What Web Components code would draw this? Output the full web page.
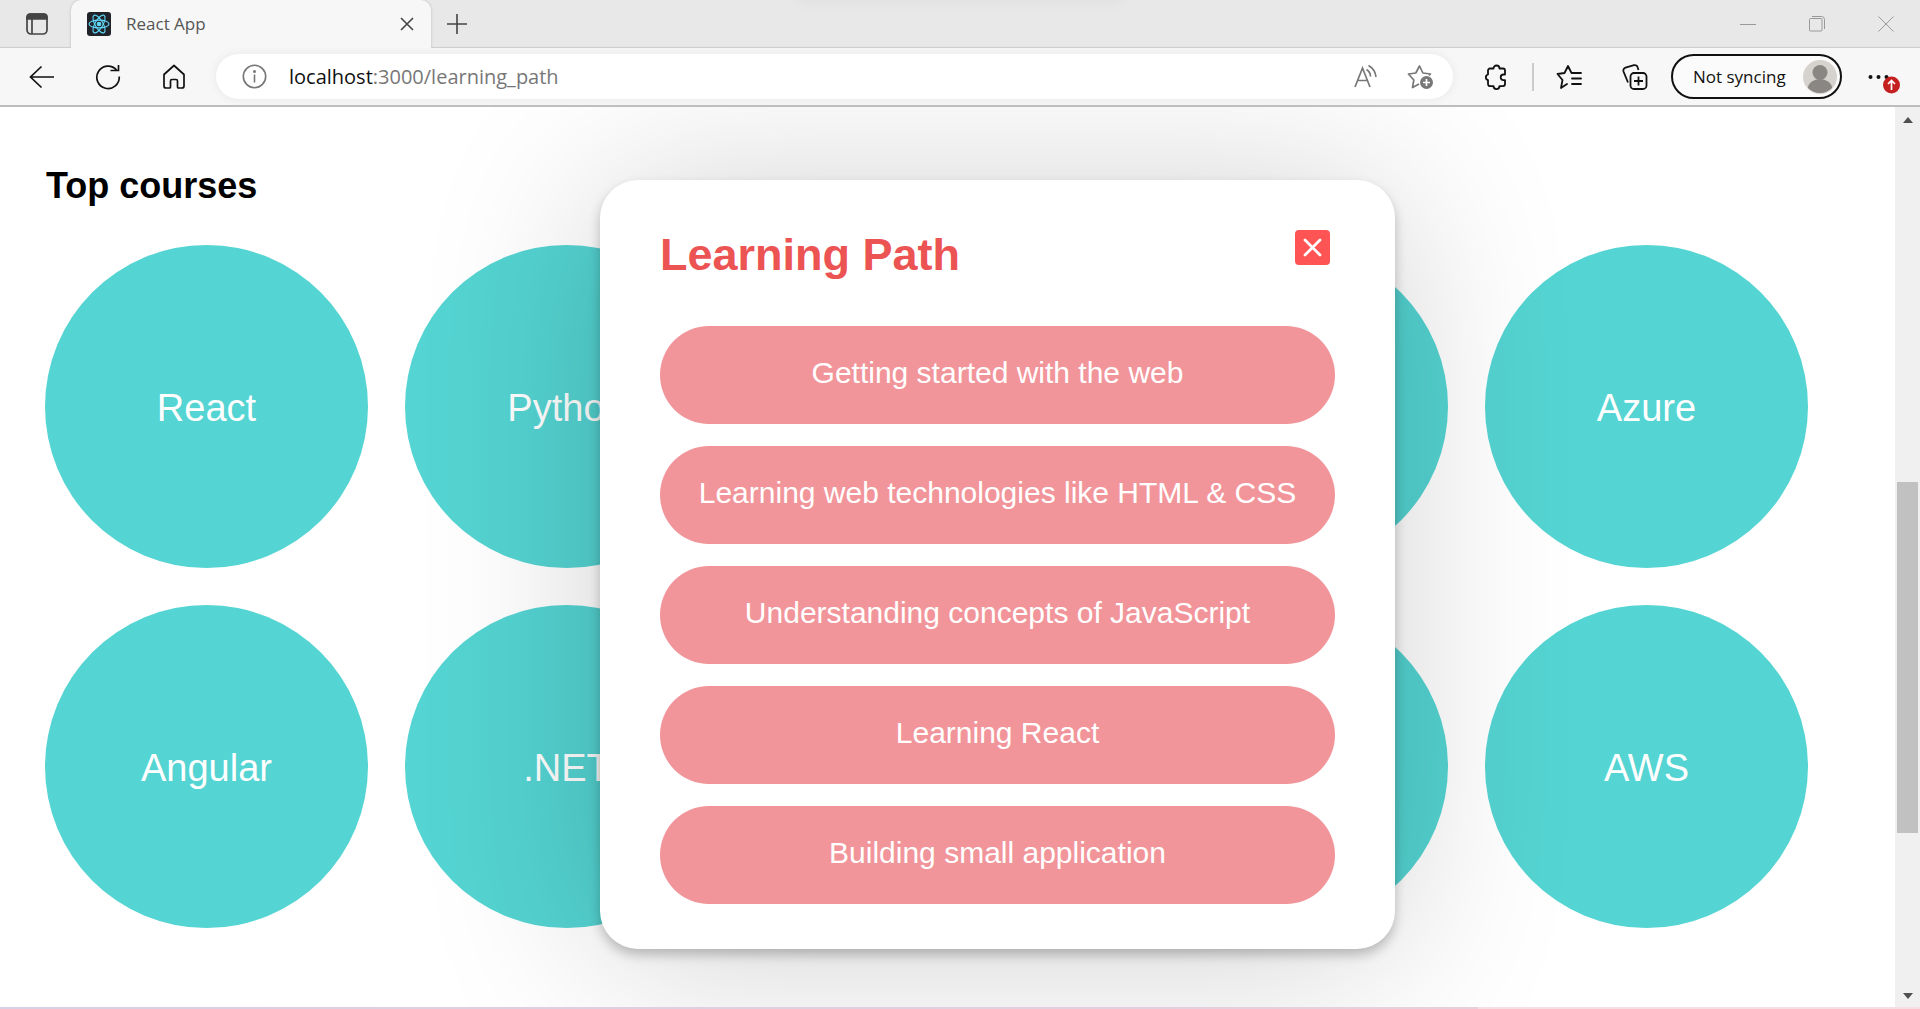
<!DOCTYPE html>
<html lang="en">
<head>
<meta charset="utf-8">
<title>React App</title>
<style>
html,body{margin:0;height:100%;overflow:hidden}
body{font-family:"Liberation Sans",Arial,sans-serif;background:#fff}
</style>
</head>
<body>
<app-window></app-window>
<script>
const define=(name,html)=>{
  const t=document.createElement('template');
  t.innerHTML='<style>*{box-sizing:border-box}button{font:inherit;color:inherit;border:0;background:none;padding:0;margin:0}svg{display:block;fill:none;stroke:currentColor}svg.solid{stroke:none}</style>'+html;
  customElements.define(name,class extends HTMLElement{
    constructor(){super();this.attachShadow({mode:'open'}).append(t.content.cloneNode(true));}
  });
};

define('tab-strip',`
<style>
:host{display:flex;align-items:stretch;height:48px;background:#e8e8e8;color:#444;box-shadow:inset 0 -2px 1px -1px #ccc;font-family:"Open Sans","Segoe UI",sans-serif;position:relative}
.menu{width:71px;padding-left:2px;display:grid;place-items:center}
.tab{width:360px;height:48px;display:flex;align-items:center;background:#f7f7f7;border-radius:10px 10px 0 0;padding:0 14px 0 16px;box-shadow:0 0 3px #bbb;clip-path:inset(0 -4px 0 -4px)}
.tab span{flex:1;font-size:17px;line-height:24px;padding-left:15px;color:#555}
.plus{width:52px;display:grid;place-items:center}
.glow{position:absolute;top:-10px;left:800px;width:320px;height:8px;box-shadow:0 0 14px #d4d4d4}
.win{margin-left:auto;display:flex;color:#999}
.win button{width:69px;display:grid;place-items:center}
</style>
<div class="glow"></div>
<button class="menu" aria-label="Tab actions"><svg width="24" height="24" viewBox="0 0 24 24" stroke-width="1.7"><rect x="2" y="2" width="20" height="20" rx="4"/><path d="M2 7V5a3 3 0 0 1 3-3h14a3 3 0 0 1 3 3v2z" fill="currentColor"/><path d="M7 7v15"/></svg></button>
<div class="tab">
<svg width="24" height="24" viewBox="0 0 24 24" style="color:#61dafb" stroke-width="1.1"><rect width="24" height="24" rx="3" fill="#20232a" stroke="none"/><ellipse cx="12" cy="12" rx="10" ry="3.9"/><ellipse cx="12" cy="12" rx="10" ry="3.9" transform="rotate(60 12 12)"/><ellipse cx="12" cy="12" rx="10" ry="3.9" transform="rotate(120 12 12)"/><circle cx="12" cy="12" r="1.8" fill="currentColor"/></svg>
<span>React App</span>
<button aria-label="Close tab"><svg width="20" height="20" viewBox="0 0 20 20" stroke-width="1.6"><path d="M4 4l12 12M16 4L4 16"/></svg></button>
</div>
<button class="plus" aria-label="New tab"><svg width="22" height="22" viewBox="0 0 22 22" stroke-width="1.6"><path d="M11 1v20M1 11h20"/></svg></button>
<div class="win">
<button aria-label="Minimize"><svg width="16" height="16" viewBox="0 0 16 16"><path d="M0 8.5h16"/></svg></button>
<button aria-label="Restore"><svg width="16" height="16" viewBox="0 0 16 16"><rect x=".5" y="2.500" width="12.500" height="12.500" rx="1"/><path d="M3 .5h9.500a3 3 0 0 1 3 3V13"/></svg></button>
<button aria-label="Close"><svg width="16" height="16" viewBox="0 0 16 16"><path d="M.5.5l15 15M15.500.5l-15 15"/></svg></button>
</div>`);

define('tool-bar',`
<style>
:host{display:flex;align-items:center;height:59px;background:#f7f7f7;border-bottom:2px solid #bdbdbd;font-family:"Open Sans","Segoe UI",sans-serif;color:#111;padding:0 20px 0 9px}
button{display:grid;place-items:center}
.nav{width:66px;height:45px}
.addr{flex:1;height:45px;margin-left:9px;border-radius:23px;background:#fff;display:flex;align-items:center;padding:0 20px 0 26px;box-shadow:0 0 8px #e6e6e6;color:#777}
.url{flex:1;position:relative;display:grid;margin-left:22px;font-size:20px;line-height:28px}
.url b{font-weight:400;color:#111}
.icons{display:flex;gap:28px}
.right{display:flex;align-items:center;height:45px}
.tool{width:26px;height:26px}
.sep{width:2px;height:28px;background:#ccc}
.profile{height:45px;width:171px;border:2px solid #111;border-radius:23px;display:flex;align-items:center;justify-content:space-between;padding:0 3px 0 20px;font-size:17px;line-height:24px;background:#fbfbfb}
.more{width:32px;height:34px}
</style>
<button class="nav" aria-label="Back"><svg width="26" height="26" viewBox="0 0 26 26" stroke-width="1.7"><path d="M25 13H2M12.500 2.500L1.500 13l11 10.500"/></svg></button>
<button class="nav" aria-label="Refresh"><svg width="26" height="26" viewBox="0 0 26 26" stroke-width="1.7"><path d="M21.500 6A11.200 11.200 0 1 0 24.200 12.500M15.500 6.500h8V1"/></svg></button>
<button class="nav" aria-label="Home"><svg width="26" height="26" viewBox="0 0 26 26" stroke-width="1.7" stroke-linejoin="round"><path d="M3 10.500L13 1.500l10 9V22a2 2 0 0 1-2 2h-3.500a1 1 0 0 1-1-1v-6a1.500 1.500 0 0 0-1.500-1.500h-4A1.500 1.500 0 0 0 9.500 17v6a1 1 0 0 1-1 1H5a2 2 0 0 1-2-2z"/></svg></button>
<div class="addr">
<svg width="25" height="25" viewBox="0 0 25 25" stroke-width="1.6"><circle cx="12.500" cy="12.500" r="11.200"/><path d="M12.500 10.500v8"/><circle cx="12.500" cy="7.500" r=".7" fill="currentColor"/></svg>
<div class="url"><span><b>localhost</b>:3000/learning_path</span></div>
<div class="icons">
<button aria-label="Read aloud"><svg width="26" height="26" viewBox="0 0 26 26" stroke-width="1.7"><path d="M2 23L9.500 4l7.500 19M4.500 16.500h10M13.500 5.500q4 2.500 4 7M15.500 1.500q6.500 3.500 7.500 11.500"/></svg></button>
<button aria-label="Add to favorites"><svg width="26" height="26" viewBox="0 0 26 26" stroke-width="1.7" stroke-linejoin="round"><path d="M12 20l-6.500 3.500 1.300-7.500L1.500 10l7.300-1L12.500 2l3.400 7 7.600 1-1.500 1.500"/><circle cx="19.500" cy="18.500" r="6.500" fill="currentColor" stroke="none"/><path d="M19.500 15v7M16 18.500h7" stroke="#fff"/></svg></button>
</div>
</div>
<div class="right">
<button class="tool" style="margin:0 23px 0 30px" aria-label="Extensions"><svg width="26" height="26" viewBox="0 0 26 26" stroke-width="1.8" stroke-linejoin="round"><path d="M7 4.500h3.500a3 3 0 0 1 6 0H20a2 2 0 0 1 2 2v4h-1.500a2.800 2.800 0 0 0 0 5.600H22v4a2 2 0 0 1-2 2h-3.500a3 3 0 0 1-6 0H7a2 2 0 0 1-2-2v-4a2.900 2.900 0 0 1 0-5.600v-4a2 2 0 0 1 2-2z"/></svg></button>
<div class="sep"></div>
<button class="tool" style="margin:0 40px 0 22px" aria-label="Favorites"><svg width="26" height="26" viewBox="0 0 26 26" stroke-width="1.8" stroke-linejoin="round" stroke-linecap="round"><path d="M11 20l-6 4 1.500-8L1.500 10l7-1L12 2l3.500 7H25M16 14.500h9M16 20h9"/></svg></button>
<button class="tool" style="margin-right:23px" aria-label="Collections"><svg width="26" height="26" viewBox="0 0 26 26" stroke-width="1.8"><rect x="8.500" y="9" width="16" height="16" rx="3.500"/><path d="M16.500 12.500v9M12 17h9M6 18.500L1.500 7.500A3 3 0 0 1 3.500 3.700L12 1.200A3 3 0 0 1 15.700 3.500L16.500 6"/></svg></button>
<button class="profile">Not syncing<svg class="solid" width="34" height="34" viewBox="0 0 34 34"><circle cx="17" cy="17" r="17" fill="#d6d3cf"/><circle cx="17" cy="12.500" r="7.500" fill="#8a8683"/><path d="M5 28a12 9 0 0 1 24 0 17 17 0 0 1-24 0z" fill="#8a8683"/></svg></button>
<button class="more" style="margin-left:26px" aria-label="Settings and more"><svg class="solid" width="32" height="34" viewBox="0 0 32 34"><g fill="#111"><circle cx="2.500" cy="17" r="2"/><circle cx="10.500" cy="17" r="2"/><circle cx="18.500" cy="17" r="2"/></g><circle cx="23.500" cy="25" r="8.500" fill="#c42020"/><path d="M23.500 30v-9M20 24l3.500-3.500L27 24" stroke="#fff" stroke-width="1.700" fill="none"/></svg></button>
</div>`);

define('course-circle',`
<style>
:host{display:block}
button{display:block;width:100%;aspect-ratio:1;border-radius:50%;background:#54d4d2;color:#fff;font-size:38px;line-height:44px;padding-top:2px}
</style><button><slot></slot></button>`);

define('course-list',`
<style>
:host{display:block;padding:58px 87px 0 45px}
h2{margin:0 0 38px;padding-left:1px;font-size:36px;line-height:42px;color:#000}
.grid{display:grid;grid-template-columns:repeat(5,1fr);gap:37px}
</style>
<h2>Top courses</h2>
<div class="grid"><slot></slot></div>`);

define('path-step',`
<style>
:host{display:block}
button{display:block;width:100%;height:98px;border-radius:49px;background:#f2959a;color:#fff;font-size:30px;line-height:36px;padding-bottom:4px}
</style><button><slot></slot></button>`);

define('path-modal',`
<style>
:host{display:block;width:795px;padding:48px 60px 45px;background:#fff;border-radius:38px;box-shadow:0 6px 12px rgba(0,0,0,.23),0 9px 180px rgba(0,0,0,.19)}
header{display:flex;justify-content:space-between;align-items:flex-start;height:98px}
h1{margin:0;font-size:45px;line-height:54px;color:#ec5353}
.close{margin:2px 5px 0 0;display:block}
.steps{display:grid;gap:22px}
</style>
<header><h1>Learning Path</h1>
<button class="close" aria-label="Close"><svg width="35" height="35" viewBox="0 0 35 35"><rect width="35" height="35" rx="4" fill="#ff5454" stroke="none"/><path d="M10 10l15 15M25 10L10 25" stroke="#fff" stroke-width="2.800" stroke-linecap="round"/></svg></button></header>
<div class="steps"><slot></slot></div>`);

define('scroll-bar',`
<style>
:host{width:25px;background:#f0f0f0;display:flex;flex-direction:column;align-items:center;padding:10px 0 8px}
.track{flex:1;width:21px;display:flex;flex-direction:column;margin:5px 0 6px}
.up,.down{border:5px solid transparent;border-top:0;border-bottom:6px solid #505050}
.down{border-bottom:0;border-top:6px solid #505050}
.a{flex:354}.thumb{flex:351;background:#c1c1c1}.b{flex:154}
</style>
<div class="up"></div><div class="track"><div class="a"></div><div class="thumb"></div><div class="b"></div></div><div class="down"></div>`);

define('app-window',`
<style>
:host{display:flex;flex-direction:column;height:100vh}
.view{flex:1;min-height:0;display:flex}
main{flex:1;position:relative;overflow:hidden}
.overlay{position:absolute;inset:0 0 auto;display:flex;justify-content:center;padding:73px 0 0 100px}
.edge{height:2px;background:linear-gradient(90deg,#d8d0e4,#e6d0dc 77%,#f6dfe3 77%)}
</style>
<tab-strip></tab-strip>
<tool-bar></tool-bar>
<div class="view">
<main>
<course-list>
<course-circle>React</course-circle><course-circle>Python</course-circle><course-circle></course-circle><course-circle></course-circle><course-circle>Azure</course-circle>
<course-circle>Angular</course-circle><course-circle>.NET</course-circle><course-circle></course-circle><course-circle></course-circle><course-circle>AWS</course-circle>
</course-list>
<div class="overlay"><path-modal>
<path-step>Getting started with the web</path-step>
<path-step>Learning web technologies like HTML &amp; CSS</path-step>
<path-step>Understanding concepts of JavaScript</path-step>
<path-step>Learning React</path-step>
<path-step>Building small application</path-step>
</path-modal></div>
</main>
<scroll-bar></scroll-bar>
</div>
<div class="edge"></div>`);
</script>
</body>
</html>
